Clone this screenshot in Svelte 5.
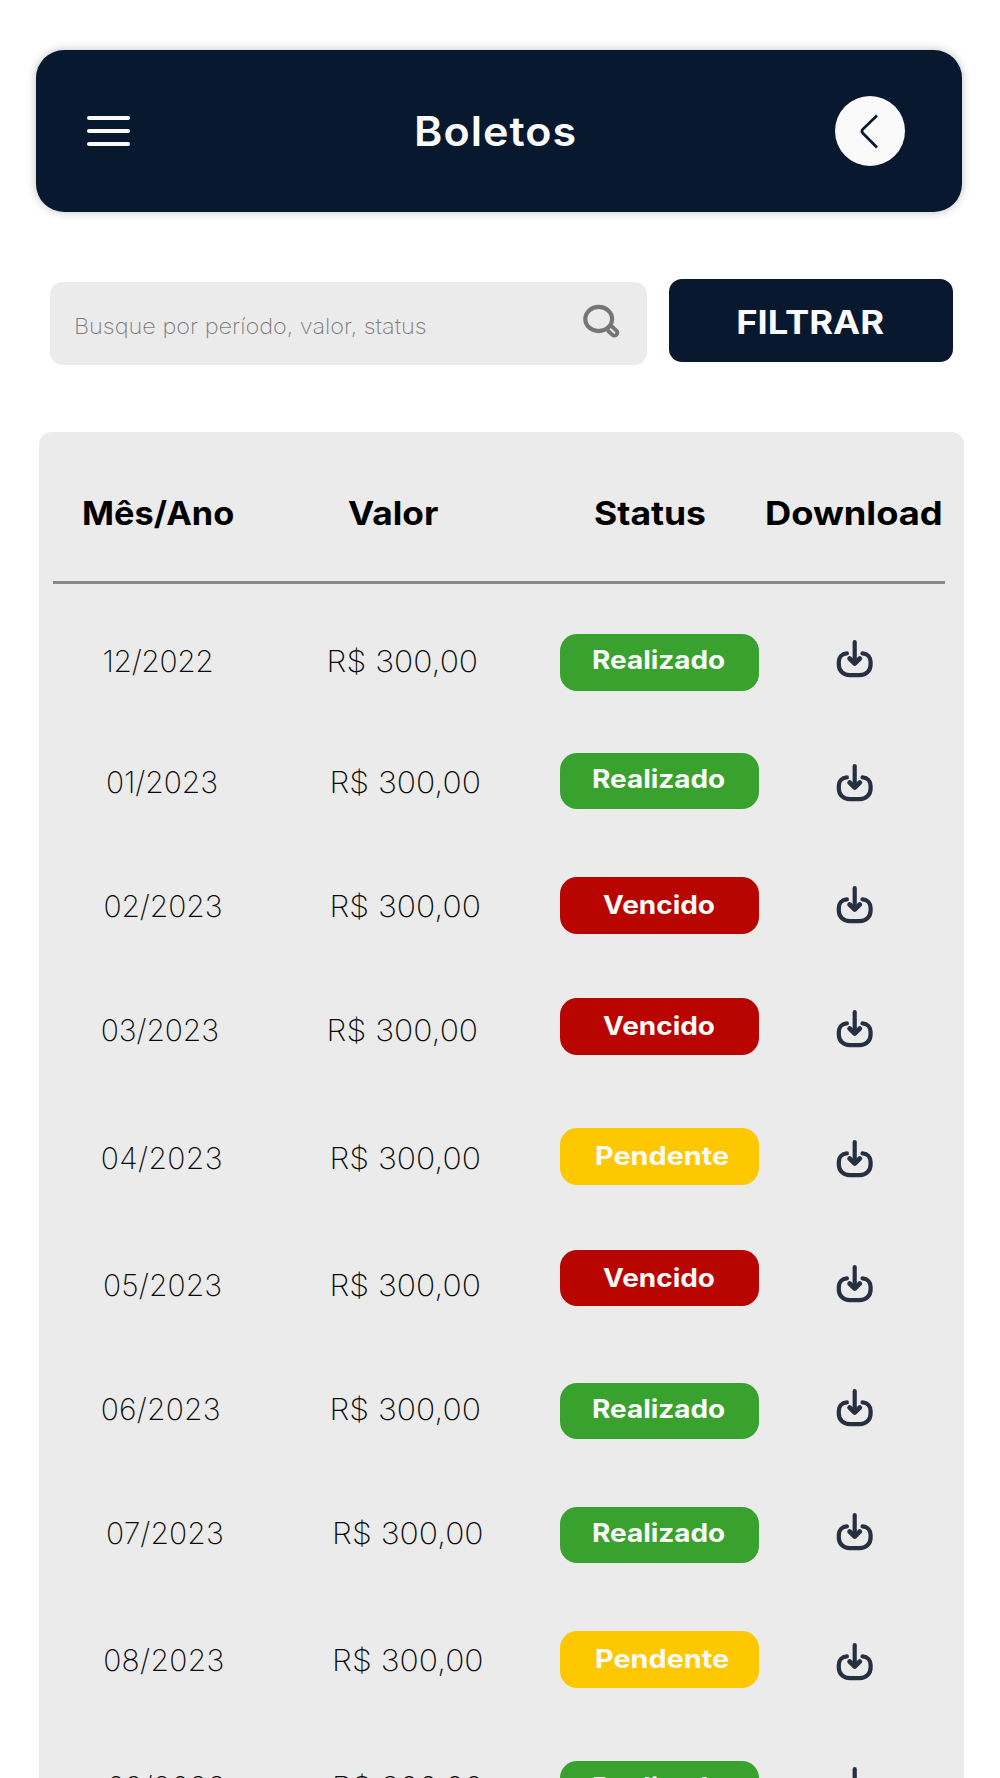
<script>
  // Per-row geometry: height of the row, offsets and tracking of its cells.
  const rows = [
    { date: '12/2022', status: 'Realizado', h: 118.5, dx: 102.5, vx: 326.6, ty: 6.8, iy: 6, ls: -0.4 },
    { date: '01/2023', status: 'Realizado', h: 124.5, dx: 106, vx: 329.4, ty: 9, iy: 11.8, ls: -0.1 },
    { date: '02/2023', status: 'Vencido', h: 121, dx: 103.4, vx: 329.4, ty: 8.8, iy: 9, ls: -0.1 },
    { date: '03/2023', status: 'Vencido', h: 130, dx: 100.7, vx: 326.6, ty: 12, iy: 12.3, ls: -0.1 },
    { date: '04/2023', status: 'Pendente', h: 121.5, dx: 100.7, vx: 329.4, ty: 9.8, iy: 12.4, ls: 0.4 },
    { date: '05/2023', status: 'Vencido', h: 133, dx: 103.1, vx: 329.4, ty: 15.1, iy: 15, ls: 0.1 },
    { date: '06/2023', status: 'Realizado', h: 124.2, dx: 100.7, vx: 329.4, ty: 6.3, iy: 6.4, ls: 0.2 },
    { date: '07/2023', status: 'Realizado', h: 124.5, dx: 106, vx: 332.1, ty: 6.3, iy: 6.8, ls: 0.1 },
    { date: '08/2023', status: 'Pendente', h: 129.8, dx: 103.2, vx: 332.1, ty: 9.1, iy: 12.2, ls: 0.3 },
    { date: '09/2023', status: 'Realizado', h: 100, dx: 107, vx: 332.1, ty: 6.1, iy: 6.4, ls: 0 }
  ];
</script>

<main class="page">
  <header class="topbar">
    <button class="menu" aria-label="Menu"><span></span><span></span><span></span></button>
    <h1>Boletos</h1>
    <button class="back" aria-label="Voltar">
      <svg width="70" height="70" viewBox="0 0 70 70" fill="none" stroke="#08182f" stroke-width="2.7">
        <path d="M42 19.5 27.7 33.3Q26.1 35.2 27.7 37L42 51.5" />
      </svg>
    </button>
  </header>

  <section class="tools">
    <div class="search">
      <span class="hint">Busque por período, valor, status</span>
      <svg class="lens" width="38" height="36" viewBox="0 0 38 36" fill="none" stroke="#757575">
        <ellipse cx="16.7" cy="16" rx="13.4" ry="12.1" stroke-width="4.2" />
        <rect x="24.8" y="25" width="11.2" height="5.8" rx="2.9" stroke-width="3.9" transform="rotate(43 30.4 28)" />
      </svg>
    </div>
    <button class="filter"><span>FILTRAR</span></button>
  </section>

  <section class="card">
    <div class="head">
      <span class="month">Mês/Ano</span><span class="amount">Valor</span><span class="state">Status</span><span class="download">Download</span>
    </div>
    <div class="rows">
      {#each rows as r}
        <div
          class="row"
          style="--h:{r.h}px; --dx:{r.dx - 39}px; --vx:{r.vx - 320}px; --ty:{r.ty}px; --iy:{r.iy}px; --ls:{r.ls}px"
        >
          <span class="date">{r.date}</span>
          <span class="value">R$ 300,00</span>
          <span class="badge {r.status.toLowerCase()}"><span>{r.status}</span></span>
          <svg class="dl" width="38" height="38" viewBox="0 0 38 38" fill="none" stroke="#263040" stroke-width="4.2" stroke-linecap="round" stroke-linejoin="round">
            <path d="M18.7 2.2V23" />
            <path d="M13.6 18.6 18.7 23.4 23.8 18.6" stroke-width="4.8" />
            <path d="M10.9 13.4C5.7 13.8 2.8 17.5 2.8 22v2.5C2.8 31 7.7 35.2 13.7 35.2h10c6 0 10.9-4.2 10.9-10.7V22c0-4.5-2.9-8.2-8.1-8.6" />
          </svg>
        </div>
      {/each}
    </div>
  </section>
</main>

<style>
  :global(body) { margin: 0; background: #fff; }
  .page {
    box-sizing: border-box;
    width: 1000px;
    height: 1778px;
    padding-top: 50px;
    overflow: hidden;
    background: #fff;
    font-family: Inter, "Open Sans", sans-serif;
    white-space: nowrap;
  }
  button { border: 0; padding: 0; font-family: inherit; }
  .topbar {
    box-sizing: border-box;
    display: flex;
    align-items: center;
    width: 925.5px;
    height: 162px;
    margin-left: 36.3px;
    padding-left: 50.9px;
    border-radius: 28px;
    background: #08182f;
    box-shadow: 0 0 10px rgba(0, 0, 0, 0.25);
  }
  .menu { display: flex; flex-direction: column; gap: 8.3px; width: 43.2px; background: none; }
  .menu span { height: 4.8px; border-radius: 3px; background: #fafafa; }
  h1 {
    width: 418px;
    margin: 0 0 0 283.5px;
    color: #fafafa;
    font-size: 40.8px;
    font-weight: 620;
    line-height: 60px;
    letter-spacing: 1px;
    transform: scaleX(1.055);
    transform-origin: 0 0;
  }
  .back { width: 70px; height: 70px; margin-left: 3px; border-radius: 50%; background: #fafafa; }
  .back svg { display: block; }
  .tools { display: flex; align-items: flex-start; margin: 66.5px 0 0 50.3px; }
  .search {
    box-sizing: border-box;
    display: flex;
    width: 596.5px;
    height: 83.5px;
    margin-top: 3px;
    padding-left: 23.5px;
    border-radius: 13px;
    background: #ebebeb;
  }
  .hint {
    width: 508.7px;
    margin-top: 29.4px;
    color: #7c7c7c;
    font-size: 22px;
    font-weight: 200;
    line-height: 30px;
    transform: scaleX(1.066);
    transform-origin: 0 0;
  }
  .lens { margin-top: 21.3px; }
  .filter {
    width: 284.5px;
    height: 83.5px;
    margin-left: 22.2px;
    padding: 5.5px 3px 0 0;
    border-radius: 13px;
    background: #08182f;
    color: #fafafa;
    font-size: 32px;
    font-weight: 700;
    line-height: 40px;
  }
  .filter span { display: inline-block; transform: scaleX(1.135); }
  .card {
    width: 925px;
    height: 1400px;
    margin: 67px 0 0 39px;
    border-radius: 13px;
    background: #ebebeb;
  }
  .head {
    box-sizing: border-box;
    display: grid;
    grid-template-columns: 266px 245.5px 171px 200px;
    width: 892px;
    height: 151.5px;
    margin-left: 14px;
    padding: 62px 0 0 29px;
    border-bottom: 3px solid #898989;
    color: #000;
    font-size: 32.4px;
    font-weight: 700;
    line-height: 40px;
  }
  .head span { justify-self: start; transform-origin: 0 0; }
  .month { transform: scaleX(1.06); }
  .amount { transform: scaleX(1.09); }
  .state { transform: scaleX(1.095); }
  .download { transform: scaleX(1.12); }
  .rows { padding-top: 50.5px; }
  .row {
    display: grid;
    grid-template-columns: 281px 240.3px 275.3px 38px;
    align-items: start;
    height: var(--h);
  }
  .date, .value { padding-top: var(--ty); color: #0a0a0a; font-size: 30px; font-weight: 240; line-height: 40px; }
  .date { padding-left: var(--dx); letter-spacing: var(--ls); }
  .value { padding-left: var(--vx); transform: scaleX(1.06); transform-origin: var(--vx) 0; }
  .badge {
    box-sizing: border-box;
    width: 199px;
    height: 56.5px;
    padding: 6px 0 0 32.2px;
    border-radius: 17px;
    color: #fafafa;
    font-size: 25.8px;
    font-weight: 700;
    line-height: 40px;
  }
  .badge span { display: block; width: max-content; transform: scaleX(1.083); transform-origin: 0 0; }
  .realizado { background: #39a22f; }
  .vencido { padding: 8.2px 0 0 43.2px; background: #b80500; }
  .pendente { padding: 8.2px 0 0 34.5px; background: #fec800; }
  .pendente span { transform: scaleX(1.117); }
  .dl { margin-top: var(--iy); }
</style>
